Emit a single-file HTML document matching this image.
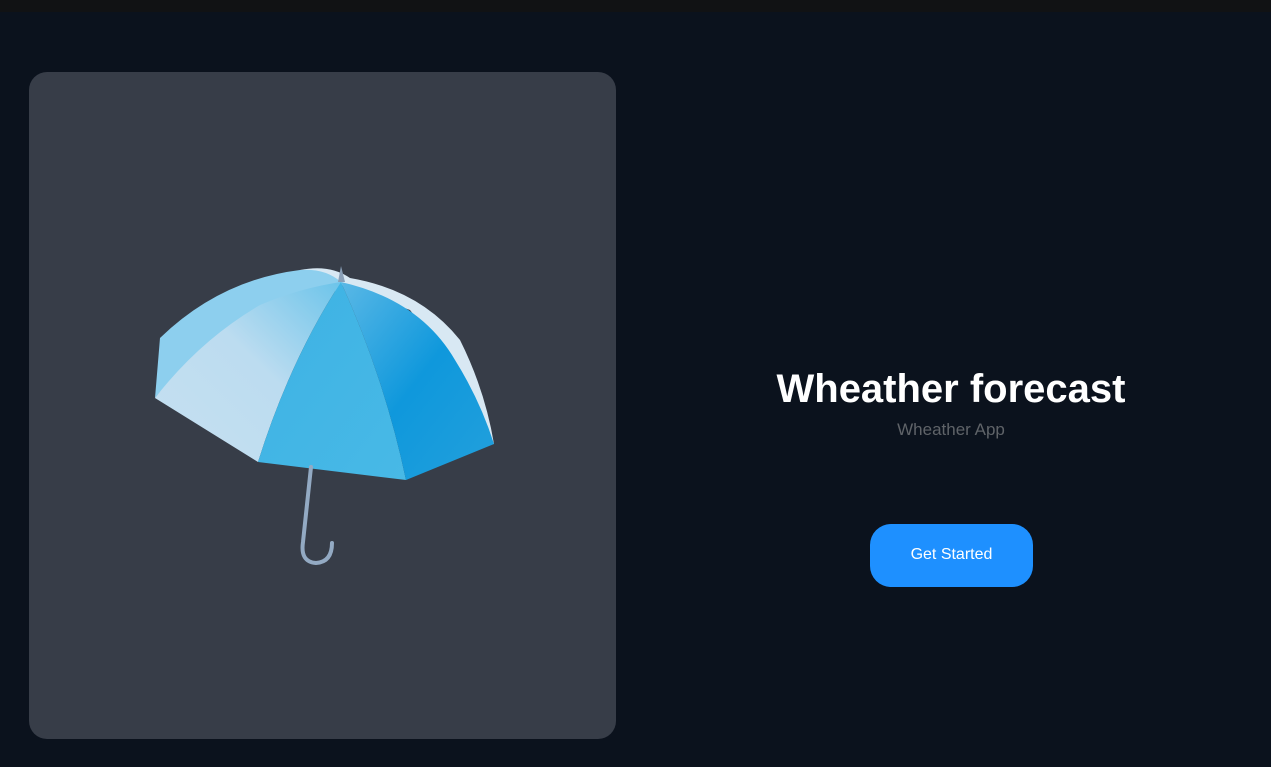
<!DOCTYPE html>
<html><head><style>
html,body{margin:0;padding:0;width:1271px;height:767px;overflow:hidden;background:#0b121d;font-family:"Liberation Sans",Arial,sans-serif;}
.top{position:absolute;left:0;top:0;width:1271px;height:12px;background:#111214;}
.card{position:absolute;left:29px;top:72px;width:587px;height:667px;border-radius:18px;background:#373d48;}
h1{position:absolute;left:651px;width:600px;top:366px;margin:0;text-align:center;color:#fff;font-size:40px;font-weight:bold;line-height:46px;}
.sub{position:absolute;left:651px;width:600px;top:420px;text-align:center;color:#5f6368;font-size:17px;}
.btn{position:absolute;left:870px;top:524px;width:163px;height:63px;border-radius:21px;background:#1e90ff;color:#fff;font-size:16px;text-align:center;line-height:62px;}
svg{position:absolute;left:0;top:0;}
</style></head><body>
<div class="top"></div>
<div class="card"></div>
<svg width="1271" height="767">
<defs>
<linearGradient id="g1" x1="0" y1="1" x2="1" y2="0"><stop offset="0" stop-color="#c6e0f1"/><stop offset="0.55" stop-color="#bcdcf0"/><stop offset="1" stop-color="#6cc4ea"/></linearGradient>
<linearGradient id="g2" x1="0" y1="0" x2="1" y2="1"><stop offset="0" stop-color="#3db2e4"/><stop offset="1" stop-color="#48b9e6"/></linearGradient>
<linearGradient id="g3" x1="0" y1="0" x2="1" y2="1"><stop offset="0" stop-color="#5ab8e6"/><stop offset="0.5" stop-color="#0f98dc"/><stop offset="1" stop-color="#23a0dc"/></linearGradient>
</defs>
<path d="M300,270 Q330,264 350,278 Q420,290 460,340 Q485,390 494,444 L480,440 Q450,360 410,310 Z" fill="#d8e8f3"/>
<path d="M160,338 Q220,280 300,270 Q325,268 341,282 L341,290 Q250,310 200,350 Q170,380 155,398 Z" fill="#8dcfee"/>
<path d="M155,398 Q200,340 260,305 Q300,288 341,282 Q290,360 258,462 Z" fill="url(#g1)"/>
<path d="M341,282 Q290,360 258,462 L406,480 Q385,380 341,282 Z" fill="url(#g2)"/>
<path d="M341,282 Q420,300 455,360 Q480,400 494,444 L406,480 Q385,380 341,282 Z" fill="url(#g3)"/>
<path d="M341,266 L338,282 L345,282 Z" fill="#8aa0b8"/>
<path d="M311,467 L303,542 Q300,562 316,563 Q332,562 332,543" fill="none" stroke="#93aac3" stroke-width="4" stroke-linecap="round"/>
</svg>
<h1>Wheather forecast</h1>
<div class="sub">Wheather App</div>
<div class="btn">Get Started</div>
</body></html>
